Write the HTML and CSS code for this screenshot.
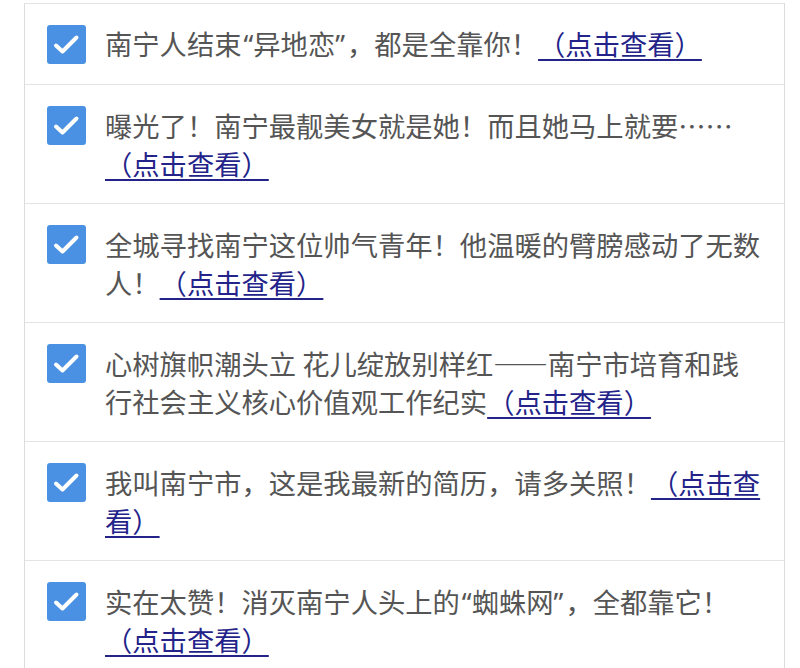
FILE: index.html
```html
<!DOCTYPE html>
<html lang="zh-CN">
<head>
  <meta charset="UTF-8">
  <title>南宁新闻</title>
  <meta name="viewport" content="width=device-width, initial-scale=1.0">
  <link rel="stylesheet" href="styles.css">
</head>
<body>

<ul class="news-list">
  <li class="news-item first">
    <span class="check"><svg viewBox="0 0 39 39" width="39" height="39"><rect width="39" height="39" rx="3" fill="#4a91e3"/><path d="M9 20.5 L15.5 26.5 L29.5 12.5" fill="none" stroke="#fff" stroke-width="4" stroke-linecap="round" stroke-linejoin="round"/></svg></span>
    <p class="title">南宁人结束<span class="q-open">“</span>异地恋<span class="q-close">”</span>，都是全靠你！<a class="more" href="#">（点击查看）</a></p>
  </li>
  <li class="news-item">
    <span class="check"><svg viewBox="0 0 39 39" width="39" height="39"><rect width="39" height="39" rx="3" fill="#4a91e3"/><path d="M9 20.5 L15.5 26.5 L29.5 12.5" fill="none" stroke="#fff" stroke-width="4" stroke-linecap="round" stroke-linejoin="round"/></svg></span>
    <p class="title">曝光了！南宁最靓美女就是她！而且她马上就要……<a class="more" href="#">（点击查看）</a></p>
  </li>
  <li class="news-item">
    <span class="check"><svg viewBox="0 0 39 39" width="39" height="39"><rect width="39" height="39" rx="3" fill="#4a91e3"/><path d="M9 20.5 L15.5 26.5 L29.5 12.5" fill="none" stroke="#fff" stroke-width="4" stroke-linecap="round" stroke-linejoin="round"/></svg></span>
    <p class="title">全城寻找南宁这位帅气青年！他温暖的臂膀感动了无数人！<a class="more" href="#">（点击查看）</a></p>
  </li>
  <li class="news-item">
    <span class="check"><svg viewBox="0 0 39 39" width="39" height="39"><rect width="39" height="39" rx="3" fill="#4a91e3"/><path d="M9 20.5 L15.5 26.5 L29.5 12.5" fill="none" stroke="#fff" stroke-width="4" stroke-linecap="round" stroke-linejoin="round"/></svg></span>
    <p class="title">心树旗帜潮头立 花儿绽放别样红——南宁市培育和践行社会主义核心价值观工作纪实<a class="more" href="#">（点击查看）</a></p>
  </li>
  <li class="news-item">
    <span class="check"><svg viewBox="0 0 39 39" width="39" height="39"><rect width="39" height="39" rx="3" fill="#4a91e3"/><path d="M9 20.5 L15.5 26.5 L29.5 12.5" fill="none" stroke="#fff" stroke-width="4" stroke-linecap="round" stroke-linejoin="round"/></svg></span>
    <p class="title">我叫南宁市，这是我最新的简历，请多关照！<a class="more" href="#">（点击查看）</a></p>
  </li>
  <li class="news-item">
    <span class="check"><svg viewBox="0 0 39 39" width="39" height="39"><rect width="39" height="39" rx="3" fill="#4a91e3"/><path d="M9 20.5 L15.5 26.5 L29.5 12.5" fill="none" stroke="#fff" stroke-width="4" stroke-linecap="round" stroke-linejoin="round"/></svg></span>
    <p class="title">实在太赞！消灭南宁人头上的<span class="q-open">“</span>蜘蛛网<span class="q-close">”</span>，全都靠它！<a class="more" href="#">（点击查看）</a></p>
  </li>
</ul>

</body>
</html>
```

FILE: styles.css
```css
html, body {
  margin: 0;
  padding: 0;
  background: #fff;
}

body {
  font-family: "Noto Sans CJK SC", "Noto Sans", sans-serif;
  padding-top: 3px;
  height: 668px;
  overflow: hidden;
}

.news-list {
  list-style: none;
  margin: 0 0 0 24px;
  padding: 0;
  width: 759px;
  border-left: 1px solid #dcdcdc;
  border-right: 1px solid #dcdcdc;
}

.news-item {
  display: flex;
  align-items: flex-start;
  gap: 19px;
  padding: 21px 19px 21px 22px;
  border-top: 1px solid #e4e4e4;
}

/* the first row sits one pixel shorter */
.news-item.first {
  padding-top: 20px;
  padding-bottom: 20px;
}

.news-item.first .check {
  margin-top: 1px;
}

.check {
  flex: 0 0 39px;
  height: 39px;
}

.check svg {
  display: block;
}

.title {
  margin: 0;
  flex: 1;
  font-size: 27.3px;
  line-height: 38px;
  color: #555;
}

/* narrow latin quotes, as in the original */
.q-open,
.q-close {
  font-family: "Noto Sans", sans-serif;
  line-height: 0;
}

.q-open {
  margin-left: 2px;
}

.q-close {
  margin-right: 2px;
}

.more {
  color: #23238a;
  text-decoration: underline;
  text-decoration-thickness: 2px;
  text-underline-offset: 4px;
}
```
